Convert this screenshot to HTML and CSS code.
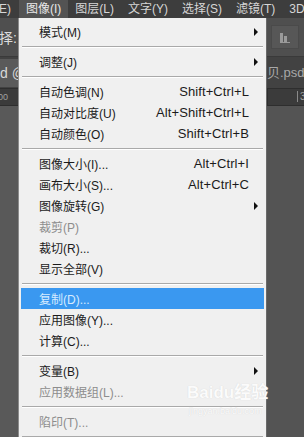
FILE: index.html
```html
<!DOCTYPE html>
<html lang="zh-CN">

<head>
    <meta charset="UTF-8">
    <meta name="viewport" content="width=device-width, initial-scale=1.0">
    <title>图像菜单</title>
    <link rel="stylesheet" href="styles.css">
</head>

<body>
    <div class="app">
        <ul class="menubar">
            <li class="mb-item first">E)</li>
            <li class="mb-item open">图像(I)</li>
            <li class="mb-item">图层(L)</li>
            <li class="mb-item">文字(Y)</li>
            <li class="mb-item">选择(S)</li>
            <li class="mb-item">滤镜(T)</li>
            <li class="mb-item">3D</li>
        </ul>
        <div class="work">
            <div class="side left">
                <div class="opt"><span class="opt-text">择:</span></div>
                <div class="tabs"><span class="tab active">d @</span></div>
                <div class="ruler"><span class="ruler-num">00</span></div>
                <div class="canvas"></div>
            </div>
            <ul class="menu">
                <li class="item sub"><span>模式(M)</span><span class="arrow"></span></li>
                <li class="sep"></li>
                <li class="item sub"><span>调整(J)</span><span class="arrow"></span></li>
                <li class="sep"></li>
                <li class="item"><span>自动色调(N)</span><span class="key">Shift+Ctrl+L</span></li>
                <li class="item"><span>自动对比度(U)</span><span class="key">Alt+Shift+Ctrl+L</span></li>
                <li class="item"><span>自动颜色(O)</span><span class="key">Shift+Ctrl+B</span></li>
                <li class="sep"></li>
                <li class="item"><span>图像大小(I)...</span><span class="key">Alt+Ctrl+I</span></li>
                <li class="item"><span>画布大小(S)...</span><span class="key">Alt+Ctrl+C</span></li>
                <li class="item sub"><span>图像旋转(G)</span><span class="arrow"></span></li>
                <li class="item disabled"><span>裁剪(P)</span></li>
                <li class="item"><span>裁切(R)...</span></li>
                <li class="item"><span>显示全部(V)</span></li>
                <li class="sep"></li>
                <li class="item hover"><span>复制(D)...</span></li>
                <li class="item"><span>应用图像(Y)...</span></li>
                <li class="item"><span>计算(C)...</span></li>
                <li class="sep"></li>
                <li class="item sub"><span>变量(B)</span><span class="arrow"></span></li>
                <li class="item disabled"><span>应用数据组(L)...</span></li>
                <li class="sep"></li>
                <li class="item disabled"><span>陷印(T)...</span></li>
                <li class="sep"></li>
            </ul>
            <div class="side right">
                <div class="opt">
                    <span class="tool-btn">
                        <svg width="10" height="12" viewBox="0 0 10 12">
                            <rect x="0" y="2" width="3" height="10" fill="#9a9a9a" />
                            <rect x="4" y="5" width="3" height="7" fill="#9a9a9a" />
                            <rect x="0" y="11" width="10" height="1" fill="#9a9a9a" />
                        </svg>
                    </span>
                </div>
                <div class="tabs"><span class="tab">贝.psd</span></div>
                <div class="ruler"><span class="ruler-num">3</span></div>
                <div class="canvas"></div>
            </div>
            <div class="watermark">Bai<span class="paw">du</span>经验<small>jingyan.baidu.com</small></div>
        </div>
    </div>
</body>

</html>
```

FILE: styles.css
```css
* {
    margin: 0;
    padding: 0;
}

body {
    width: 304px;
    height: 437px;
    overflow: hidden;
    background-color: #535353;
    font-family: "Liberation Sans", "Noto Sans CJK SC", sans-serif;
}

ul {
    list-style: none;
}

.app {
    display: grid;
    grid-template-rows: 18px 1fr;
    height: 437px;
}

/* 顶部菜单栏 */
.menubar {
    display: flex;
    background-color: #3d3d3d;
    color: #d6d6d6;
    font-size: 12px;
    line-height: 18px;
}

.mb-item {
    padding: 0 7px;
    white-space: nowrap;
}

.mb-item.first {
    width: 19px;
    padding: 0;
    box-sizing: border-box;
    text-indent: -1px;
}

.mb-item.open {
    background-color: #535353;
    color: #e8e8e8;
}

.work {
    position: relative;
    display: flex;
    overflow: hidden;
}

/* 两侧的工作区 */
.side {
    display: flex;
    flex-direction: column;
    overflow: hidden;
    white-space: nowrap;
}

.side.left {
    width: 18px;
}

.side.right {
    width: 37px;
}

.opt {
    height: 38px;
    display: flex;
    align-items: center;
    background-color: #4f4f4f;
    border-bottom: 1px solid #3a3a3a;
}

.opt-text {
    color: #dcdcdc;
    font-size: 14px;
    margin-left: -1px;
}

.tool-btn {
    display: flex;
    align-items: center;
    justify-content: center;
    margin-left: 4px;
    width: 26px;
    height: 22px;
    background-color: #575757;
    border: 1px solid #4a4a4a;
}

.tabs {
    height: 31px;
    display: flex;
    align-items: center;
    background-color: #424242;
}

.tab {
    display: block;
    line-height: 28px;
    height: 28px;
    font-size: 14px;
    color: #a8a8a8;
}

.tab.active {
    background-color: #5a5a5a;
    color: #d8d8d8;
    padding-right: 4px;
}

.right .tab {
    margin-left: 0;
    font-size: 13px;
}

.ruler {
    height: 16px;
    background-color: #3b3b3b;
    border-top: 1px solid #2e2e2e;
    border-bottom: 1px solid #2e2e2e;
    color: #a0a0a0;
    font-size: 9px;
    line-height: 16px;
}

.left .ruler-num {
    margin-left: -2px;
}

.right .ruler {
    padding-left: 29px;
    border-left: 1px solid #2e2e2e;
}

.right .ruler-num {
    border-left: 1px solid #8a8a8a;
    padding-left: 2px;
    font-size: 10px;
}

.canvas {
    flex: 1;
    background-color: #595959;
}

.right .canvas {
    background-color: #545454;
}

/* 下拉菜单 */
.menu {
    width: 249px;
    flex: none;
    box-sizing: border-box;
    padding: 3px 2px 0 2px;
    background-color: #f0f0f0;
    border-left: 1px solid #8c8c8c;
    border-right: 1px solid #6a6a6a;
    color: #1b1b1b;
    font-size: 12px;
    overflow: hidden;
}

.item {
    display: flex;
    justify-content: space-between;
    align-items: center;
    height: 21px;
    padding: 0 15px 0 18px;
    white-space: nowrap;
}

.key {
    font-size: 13px;
    letter-spacing: 0.1px;
}

.arrow {
    width: 0;
    height: 0;
    margin-right: -9px;
    border-top: 4px solid transparent;
    border-bottom: 4px solid transparent;
    border-left: 4px solid #111;
}

.item.disabled {
    color: #8d8d8d;
}

.item.hover {
    background-color: #3a98f0;
    color: #d6ebff;
}

.sep {
    height: 1px;
    margin: 4px 1px 3px;
    background-color: #a9a9a9;
    border-bottom: 1px solid #ffffff;
}

/* 水印 */
.watermark {
    position: absolute;
    left: 187px;
    top: 366px;
    color: #fbfbfb;
    font-size: 17px;
    font-weight: bold;
    line-height: 18px;
    text-shadow: 0 0 1px #d0d0d0;
    white-space: nowrap;
}

.watermark small {
    display: block;
    font-size: 9px;
    font-weight: normal;
    margin-left: 2px;
}
```
